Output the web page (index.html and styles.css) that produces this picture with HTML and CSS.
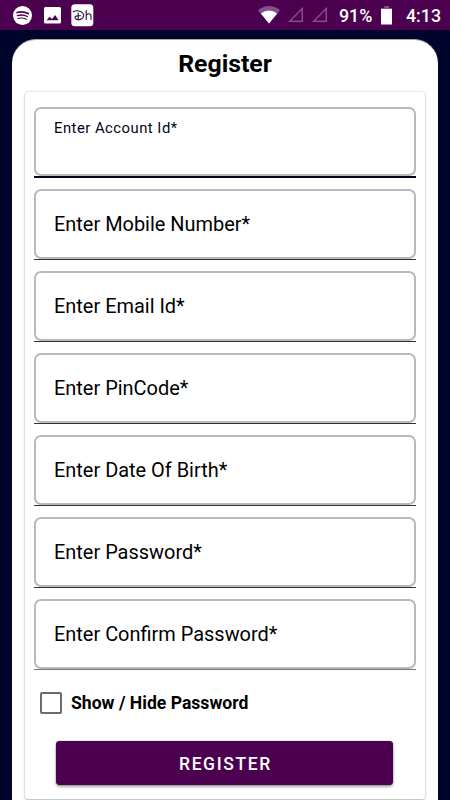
FILE: index.html
```html
<!DOCTYPE html>
<html lang="en">
<head>
<meta charset="utf-8">
<title>Register</title>
<link rel="stylesheet" href="styles.css">
</head>
<body>
<header class="status">
  <svg class="spotify" width="19" height="19" viewBox="0 0 19 19" fill="none" stroke="#4b0050" stroke-linecap="round">
    <circle cx="9.5" cy="9.5" r="9.5" fill="#fff" stroke="none"/>
    <path d="M4 6.500Q9.700 4.700 15.300 7.500" stroke-width="1.700"/>
    <path d="M4.500 9.600Q9.700 8 14.300 10.500" stroke-width="1.400"/>
    <path d="M5 12.500Q9.500 11.200 13.200 13.300" stroke-width="1.200"/>
  </svg>
  <svg class="photo" width="17" height="17" viewBox="0 0 17 17">
    <rect width="17" height="16.500" rx="1.500" fill="#fff"/>
    <path d="M2.600 13.300 5.600 9.800 8 12 11.200 8 14.500 13.300Z" fill="#4b0050"/>
  </svg>
  <svg class="disney" width="23" height="23" viewBox="0 0 23 23" fill="none" stroke="#35103b" stroke-width="1.100" stroke-linecap="round">
    <rect x=".3" y=".3" width="22" height="22" rx="3.500" fill="#fff" stroke="none"/>
    <path d="M2.400 7.800C6 5.500 12.600 7.500 12.600 11.600C12.600 15.400 7 16.700 5 15C2.800 13.200 4.200 11.300 9.500 11.800M7.200 9V15.300"/>
    <path d="M15.200 6.500V15.500M15.200 12C15.500 9 20 9 20 12V15.500"/>
  </svg>
  <span class="spacer"></span>
  <svg class="wifi" width="22" height="18" viewBox="0 0 22 18">
    <path d="M0 4.200Q11-4 22 4.200L11 17.500Z" fill="#864f8a"/>
    <path d="M2.800 7.400Q11 1.500 19.200 7.400L11 17.500Z" fill="#fff"/>
  </svg>
  <svg class="signal" width="16" height="16" viewBox="0 0 16 16"><path d="M1.600 14.300H14.300V1.500Z" fill="none" stroke="#864f8a" stroke-width="1.400"/></svg>
  <svg class="signal" width="16" height="16" viewBox="0 0 16 16"><path d="M1.600 14.300H14.300V1.500Z" fill="none" stroke="#864f8a" stroke-width="1.400"/></svg>
  <span class="percent">91%</span>
  <svg class="battery" width="11" height="19" viewBox="0 0 11 19"><path d="M3.300 0H8V2H11V4H0V2H3.300Z" fill="#864f8a"/><path d="M0 3H11V18.500H0Z" fill="#fff"/></svg>
  <span class="time">4:13</span>
</header>
<main class="panel">
  <h1>Register</h1>
  <form class="card">
    <div class="field active"><label>Enter Account Id*</label></div>
    <div class="field"><label>Enter Mobile Number*</label></div>
    <div class="field"><label>Enter Email Id*</label></div>
    <div class="field"><label>Enter PinCode*</label></div>
    <div class="field"><label>Enter Date Of Birth*</label></div>
    <div class="field"><label>Enter Password*</label></div>
    <div class="field last"><label>Enter Confirm Password*</label></div>
    <div class="toggle"><span class="box"></span><span class="toggle-text">Show / Hide Password</span></div>
    <button type="button">REGISTER</button>
  </form>
</main>
</body>
</html>
```
FILE: styles.css
```css
* { box-sizing: border-box; }
body {
  margin: 0;
  height: 800px;
  overflow: hidden;
  background: #00052b;
  font-family: Roboto, sans-serif;
  color: #000;
}
.status {
  display: flex;
  align-items: center;
  height: 30px;
  padding: 0 9px 0 13px;
  background: #4b0050;
  color: #fff;
  font-size: 17.8px;
  font-weight: 500;
  line-height: 30px;
}
.status svg { display: block; flex: none; }
.photo { margin-left: 12px; }
.disney { margin-left: 10px; }
.spacer { flex: 1; }
.signal { margin-left: 8px; }
.percent { width: 34px; margin-left: 11px; white-space: nowrap; padding-top: 2px; }
.battery { margin-left: 8px; }
.time { width: 35px; margin-left: 14px; white-space: nowrap; padding-top: 2px; }
.panel {
  margin: 9px 12px 0;
  height: 800px;
  padding: 0 13px;
  border-radius: 24px 24px 0 0;
  border-top: 1px solid #aaa;
  background: #fff;
}
h1 {
  margin: 0;
  height: 52px;
  font-size: 24.8px;
  line-height: 47px;
  font-weight: 700;
  text-align: center;
}
.card {
  height: 707px;
  padding: 15px 9px 0;
  border-radius: 3px;
  box-shadow: 0 0 2px rgba(0,0,0,.3), 0 1px 2px rgba(0,0,0,.2);
}
.field {
  display: flex;
  align-items: center;
  position: relative;
  height: 71px;
  margin-bottom: 11px;
  padding: 1px 0 0 20px;
  border-bottom: 1px solid #333;
}
.field::before {
  content: "";
  position: absolute;
  inset: 0;
  border: 2px solid #b9b9b9;
  border-radius: 7px;
}
.field label { font-size: 19.95px; line-height: 25px; }
.field.active { align-items: flex-start; border-bottom: 2px solid #00051b; }
.field.last { border-bottom-color: #777; }
.field.active label { padding-top: 8px; font-size: 14.8px; letter-spacing: .5px; color: #00051b; }
.toggle { display: flex; align-items: center; height: 44px; padding-left: 6px; }
.box { width: 22px; height: 22px; border: 2px solid #6b6b6b; border-radius: 2px; }
.toggle-text { margin-left: 9px; font-size: 17.6px; font-weight: 700; }
button {
  display: block;
  width: 337px;
  height: 44px;
  margin: 16px 0 0 22.400px;
  padding: 1px 0 0 1px;
  border: 0;
  border-radius: 4px;
  background: #4b0050;
  color: #fff;
  box-shadow: 0 2px 3px rgba(0,0,0,.35), 0 0 1px #333;
  font: 500 17.5px Roboto, sans-serif;
  letter-spacing: 1.6px;
}
```
